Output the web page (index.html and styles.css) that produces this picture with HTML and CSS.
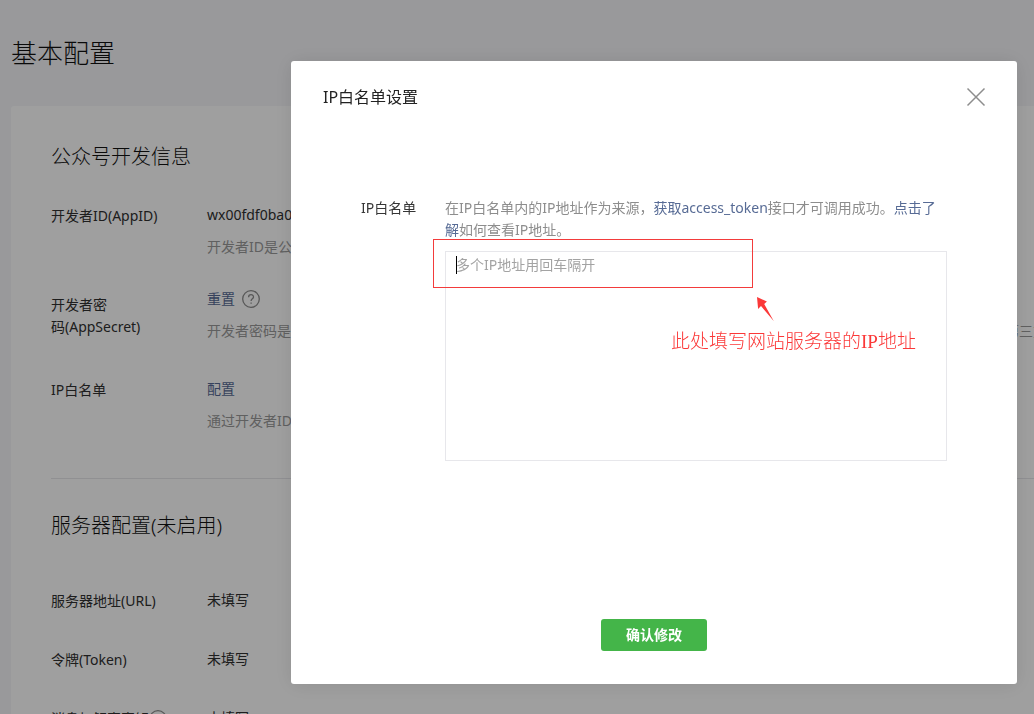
FILE: index.html
```html
<!DOCTYPE html>
<html lang="zh-CN">
<head>
<meta charset="utf-8">
<title>基本配置</title>
<link rel="stylesheet" href="styles.css">
</head>
<body>
<main class="page">
  <h1 class="page-title">基本配置</h1>
  <div class="panel">
    <section class="section">
      <h2 class="section-title">公众号开发信息</h2>
      <dl class="rows">
        <div class="row">
          <dt class="row-label">开发者ID(AppID)</dt>
          <dd class="row-value">wx00fdf0ba0
            <p class="hint">开发者ID是公众号开发识别码，配合开发者密码可调用公众号的接口能力。</p>
          </dd>
        </div>
        <div class="row row-tall">
          <dt class="row-label">开发者密<br>码(AppSecret)</dt>
          <dd class="row-value">
            <div class="inline"><a class="link" href="#reset">重置</a>
              <svg class="help" viewBox="0 0 18 18" aria-hidden="true"><circle cx="9" cy="9" r="8.3"/><path d="M6.6 7.2c0-3.4 4.9-3.2 4.9-.3 0 1.8-2.4 1.9-2.4 4M9.1 12.5v1.2"/></svg>
            </div>
            <p class="hint">开发者密码是校验公众号开发者身份的密码，具有极高的安全性。切记勿把密码直接交给第三方开发者或直接存储在代码中。如需第三方代开发公众号，请使用授权方式接入。</p>
          </dd>
        </div>
        <div class="row">
          <dt class="row-label">IP白名单</dt>
          <dd class="row-value"><a class="link" href="#whitelist">配置</a>
            <p class="hint">通过开发者ID及密码调用获取access_token接口时，需要设置访问来源IP为白名单。</p>
          </dd>
        </div>
      </dl>
    </section>
    <section class="section section-server">
      <h2 class="section-title">服务器配置(未启用)</h2>
      <dl class="rows">
        <div class="row"><dt class="row-label">服务器地址(URL)</dt><dd class="row-value">未填写</dd></div>
        <div class="row"><dt class="row-label">令牌(Token)</dt><dd class="row-value">未填写</dd></div>
        <div class="row">
          <dt class="row-label label-help">消息加解密密钥<svg class="help" viewBox="0 0 18 18" aria-hidden="true"><circle cx="9" cy="9" r="8.3"/><path d="M6.6 7.2c0-3.4 4.9-3.2 4.9-.3 0 1.8-2.4 1.9-2.4 4M9.1 12.5v1.2"/></svg></dt>
          <dd class="row-value">未填写</dd>
        </div>
      </dl>
    </section>
  </div>
</main>

<div class="mask">
  <form class="dialog" role="dialog" aria-labelledby="dialog-title">
    <header class="dialog-head">
      <h3 class="dialog-title" id="dialog-title">IP白名单设置</h3>
      <button class="close" type="button" aria-label="关闭">
        <svg viewBox="0 0 20 20" aria-hidden="true"><path d="M1.5 1.5l17 17M18.5 1.5l-17 17"/></svg>
      </button>
    </header>
    <div class="field">
      <label class="field-label" for="ip-list">IP白名单</label>
      <div class="field-main">
        <p class="desc">在IP白名单内的IP地址作为来源，<a class="link" href="#token">获取access_token</a>接口才可调用成功。<a class="link" href="#more">点击了解</a>如何查看IP地址。</p>
        <div class="input-wrap">
          <textarea class="input" id="ip-list" placeholder="多个IP地址用回车隔开"></textarea>
          <span class="caret"></span>
          <span class="mark-box"></span>
          <svg class="mark-arrow" viewBox="0 0 20 26" aria-hidden="true"><path d="M1 1l1.1 12 2.9-2.9L17.7 25 8.2 7.9l2.7-2.3z"/></svg>
          <span class="mark-text">此处填写网站服务器的IP地址</span>
        </div>
      </div>
    </div>
    <footer class="dialog-foot"><button class="submit" type="submit">确认修改</button></footer>
  </form>
</div>
</body>
</html>
```

FILE: styles.css
```css
* { box-sizing: border-box; }

body {
  margin: 0;
  height: 100vh;
  overflow: hidden;
  background: #f5f6f9;
  color: #303030;
  font: 400 14px/22px "Noto Sans", "Noto Sans CJK SC", sans-serif;
}

h1, h2, h3, p, dl, dd { margin: 0; font-weight: inherit; }
a { text-decoration: none; }

.page { padding: 34px 0 0 11px; height: 100vh; overflow: hidden; }
.page-title { font-size: 26px; line-height: 38px; margin-bottom: 34px; font-weight: 300; color: #111; }
.panel { background: #fff; border-radius: 3px 0 0 3px; padding: 37px 0 40px 40px; }
.section-title { font-size: 20px; line-height: 28px; margin-bottom: 33px; font-weight: 300; color: #111; }
.row { display: grid; grid-template-columns: 112px 1fr; column-gap: 44px; margin-bottom: 30px; }
.row-tall { align-items: center; margin-bottom: 36px; }
.row-label { padding-top: 1px; margin-bottom: -1px; }
.row-value { min-width: 0; }
.hint { margin-top: 10px; color: #9a9a9a; white-space: nowrap; overflow: hidden; }
.inline { display: flex; align-items: center; gap: 7px; }
.link { color: #576b95; }
.help { width: 18px; height: 18px; flex: none; fill: none; stroke: #8d8d8d; stroke-width: 1.3; }
.label-help { display: flex; align-items: center; white-space: nowrap; }
.section-server { border-top: 1px solid #e7e7eb; margin-top: 46px; padding-top: 33px; }
.section-server .section-title { margin-bottom: 49px; }
.section-server .row { margin-bottom: 37px; }

.mask {
  position: fixed;
  inset: 0;
  display: flex;
  padding: 61px 17px 30px 291px;
  background: rgba(0, 0, 0, .375);
}
.dialog {
  flex: 1;
  display: flex;
  flex-direction: column;
  background: #fff;
  border-radius: 3px;
  box-shadow: 0 1px 20px rgba(0, 0, 0, .1);
}
.dialog-head { display: flex; align-items: center; justify-content: space-between; padding: 0 31px 0 32px; height: 72px; }
.dialog-title { font-size: 16px; line-height: 24px; color: #222; }
.close { width: 20px; height: 20px; padding: 0; border: 0; background: none; }
.close svg { display: block; fill: none; stroke: #8d8d8d; stroke-width: 1.5; }
.field { display: grid; grid-template-columns: 84px 1fr; padding: 64px 70px 0; }
.desc { color: #8d8d8d; }
.field-label { color: #353535; }
.input-wrap { position: relative; margin-top: 10px; }
.input {
  display: block;
  width: 100%;
  height: 210px;
  padding: 2px 10px;
  border: 1px solid #e7e7eb;
  border-radius: 0;
  outline: 0;
  resize: none;
  color: #353535;
  font: inherit;
}
.input::placeholder { color: #a3a3a3; opacity: 1; }
.caret { position: absolute; left: 11px; top: 5px; width: 1px; height: 18px; background: #000; }
.mark-box { position: absolute; left: -12px; top: -12px; width: 320px; height: 49px; border: 1px solid #f33b3b; pointer-events: none; }
.mark-arrow { position: absolute; left: 311px; top: 45px; width: 20px; height: 26px; fill: #fb3838; }
.mark-text { position: absolute; left: 226px; top: 79px; color: #fb3838; font: 400 19px/24px "Liberation Serif", "Noto Sans CJK SC", serif; font-weight: 300; white-space: nowrap; }
.dialog-foot { margin-top: auto; padding-bottom: 33px; text-align: center; }
.submit { width: 106px; height: 32px; padding: 0; border: 0; border-radius: 3px; background: #44b549; color: #fff; font: 700 14px/32px "Noto Sans", "Noto Sans CJK SC", sans-serif; vertical-align: top; }
```
